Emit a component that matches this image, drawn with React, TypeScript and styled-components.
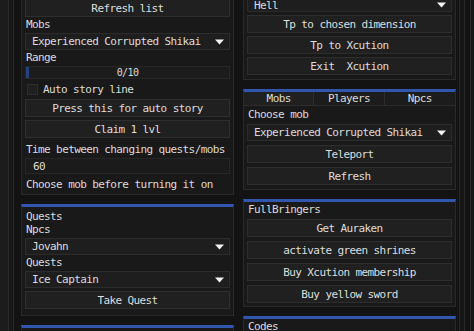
import React, { useState } from 'react';
import styled, { createGlobalStyle } from 'styled-components';

const GlobalStyle = createGlobalStyle`
  html, body {
    margin: 0;
    padding: 0;
    background: #181818;
  }
  body {
    font-family: "DejaVu Sans Mono", "Liberation Mono", monospace;
    font-size: 11px;
    letter-spacing: -0.6px;
    color: #dcdcdc;
  }
`;

const App: React.FC = () => {
  const [autoStory, setAutoStory] = useState(false);
  const [tab, setTab] = useState('Mobs');

  return (
    <>
      <GlobalStyle />
      <Screen>
        <Gutter />
        <WindowFrame>
          <ScrollRegion>
            <Column $offset={-6} $gap={9}>
              <Panel>
                <Button>Refresh list</Button>
                <Label>Mobs</Label>
                <Combo value="Experienced Corrupted Shikai" />
                <Label>Range</Label>
                <Slider>
                  <Grab />
                  0/10
                </Slider>
                <CheckRow onClick={() => setAutoStory(!autoStory)}>
                  <CheckBox $on={autoStory} />
                  Auto story line
                </CheckRow>
                <Button>Press this for auto story</Button>
                <Button>Claim 1 lvl</Button>
                <Label $mt={4}>Time between changing quests/mobs</Label>
                <Input defaultValue="60" />
                <Label $mt={3}>Choose mob before turning it on</Label>
              </Panel>

              <Panel $accent $pb={6}>
                <Title>Quests</Title>
                <Label>Npcs</Label>
                <Combo value="Jovahn" />
                <Label>Quests</Label>
                <Combo value="Ice Captain" />
                <Button>Take Quest</Button>
              </Panel>

              <Panel $accent>
                <Spacer />
              </Panel>
            </Column>

            <Column $offset={-11} $gap={9}>
              <Panel $gap={3}>
                <Combo value="Hell" tall />
                <Button>Tp to chosen dimension</Button>
                <Button>Tp to Xcution</Button>
                <Button>Exit  Xcution</Button>
              </Panel>

              <Panel $accent $flush>
                <Tabs>
                  {['Mobs', 'Players', 'Npcs'].map((t) => (
                    <Tab key={t} $active={tab === t} onClick={() => setTab(t)}>
                      {t}
                    </Tab>
                  ))}
                </Tabs>
                <TabBody>
                  <Label>Choose mob</Label>
                  <Combo value="Experienced Corrupted Shikai" />
                  <Button>Teleport</Button>
                  <Button>Refresh</Button>
                </TabBody>
              </Panel>

              <Panel $accent $gap={4} $pb={3}>
                <Title $tight>FullBringers</Title>
                <Button>Get Auraken</Button>
                <Button>activate green shrines</Button>
                <Button>Buy Xcution membership</Button>
                <Button>Buy yellow sword</Button>
              </Panel>

              <Panel $accent>
                <Title $tight>Codes</Title>
              </Panel>
            </Column>

            <RightEdge>
              <Track />
            </RightEdge>
          </ScrollRegion>
        </WindowFrame>
      </Screen>
    </>
  );
};

type ComboProps = { value: string; tall?: boolean };

const Combo: React.FC<ComboProps> = ({ value, tall }) => {
  return (
    <ComboBox $tall={tall}>
      <span>{value}</span>
      <svg width="9" height="6" viewBox="0 0 9 6">
        <path d="M0 0.5 L9 0.5 L4.5 5.5 Z" fill="#f2f2f2" />
      </svg>
    </ComboBox>
  );
};

const Screen = styled.div`
  width: 474px;
  height: 331px;
  overflow: hidden;
  display: flex;
  background: #1a1a1a;
`;

const Gutter = styled.div`
  width: 8px;
  flex: none;
  background: #1c1c1c;
`;

const WindowFrame = styled.div`
  flex: 1;
  display: flex;
  border-left: 1px solid #2c2c2c;
  padding-left: 4px;
  background: #171717;
`;

const ScrollRegion = styled.div`
  flex: 1;
  display: flex;
  align-items: flex-start;
  gap: 9px;
  border-left: 1px solid #2a2a2a;
  padding-left: 7px;
  background: #131313;
`;

const Column = styled.div<{ $offset: number; $gap: number }>`
  width: 213px;
  flex: none;
  display: flex;
  flex-direction: column;
  gap: ${(p) => p.$gap}px;
  margin-top: ${(p) => p.$offset}px;
`;

const Panel = styled.div<{ $accent?: boolean; $flush?: boolean; $gap?: number; $pb?: number }>`
  display: flex;
  flex-direction: column;
  gap: ${(p) => p.$gap ?? 3}px;
  background: #191919;
  border: 1px solid #2a2a2a;
  border-top: ${(p) => (p.$accent ? '3px solid #3156ad' : '1px solid #2a2a2a')};
  padding: ${(p) => (p.$flush ? '0' : p.$accent ? `3px 3px ${p.$pb ?? 5}px` : '4px 3px')};
`;

const Spacer = styled.div`
  height: 20px;
`;

const Title = styled.div<{ $tight?: boolean }>`
  height: 10px;
  line-height: 10px;
  padding-left: 1px;
  margin-top: ${(p) => (p.$tight ? 0 : 2)}px;
  white-space: nowrap;
`;

const Label = styled.div<{ $mt?: number }>`
  height: 10px;
  line-height: 10px;
  padding-left: 1px;
  margin-top: ${(p) => p.$mt ?? 0}px;
  white-space: nowrap;
`;

const Button = styled.button`
  height: 18px;
  padding: 0;
  font: inherit;
  letter-spacing: inherit;
  color: #dedede;
  background: #202020;
  border: 1px solid #2e2e2e;
  white-space: pre;
  cursor: pointer;

  &:hover {
    background: #262626;
  }
`;

const ComboBox = styled.div<{ $tall?: boolean }>`
  height: ${(p) => (p.$tall ? 18 : 17)}px;
  box-sizing: border-box;
  display: flex;
  align-items: center;
  justify-content: space-between;
  padding: ${(p) => (p.$tall ? '4px 5px 0 6px' : '0 5px 0 6px')};
  background: #1e1e1e;
  border: 1px solid #2c2c2c;
  white-space: nowrap;
`;

const Slider = styled.div`
  height: 13px;
  box-sizing: border-box;
  display: flex;
  align-items: center;
  justify-content: center;
  position: relative;
  background: #1c1c1c;
  border: 1px solid #272727;
  font-size: 10px;
`;

const Grab = styled.div`
  position: absolute;
  left: 0;
  top: 0;
  bottom: 0;
  width: 3px;
  background: #24427f;
`;

const CheckRow = styled.div`
  height: 14px;
  display: flex;
  align-items: center;
  gap: 5px;
  padding-left: 2px;
  cursor: pointer;
  white-space: nowrap;
`;

const CheckBox = styled.div<{ $on: boolean }>`
  width: 11px;
  height: 11px;
  box-sizing: border-box;
  background: ${(p) => (p.$on ? '#3156ad' : '#202020')};
  border: 1px solid #2c2c2c;
`;

const Input = styled.input`
  height: 16px;
  box-sizing: border-box;
  padding: 0 0 0 7px;
  font: inherit;
  letter-spacing: inherit;
  color: #dcdcdc;
  background: #1b1b1b;
  border: 1px solid #262626;
  outline: none;
`;

const Tabs = styled.div`
  display: grid;
  grid-template-columns: repeat(3, 1fr);
`;

const Tab = styled.div<{ $active: boolean }>`
  height: 14px;
  line-height: 13px;
  text-align: center;
  background: ${(p) => (p.$active ? '#202020' : '#1c1c1c')};
  border-right: 1px solid #2c2c2c;
  border-bottom: 1px solid #2c2c2c;
  box-sizing: border-box;
  cursor: pointer;

  &:last-child {
    border-right: none;
  }
`;

const TabBody = styled.div`
  display: flex;
  flex-direction: column;
  gap: 4px;
  padding: 1px 3px 4px;
`;

const RightEdge = styled.div`
  flex: none;
  align-self: stretch;
  width: 17px;
  margin-left: -6px;
  border-left: 1px solid #262626;
  padding-left: 4px;
  background: #161616;
`;

const Track = styled.div`
  width: 5px;
  height: 100%;
  border-left: 1px solid #2a2a2a;
  border-right: 1px solid #2a2a2a;
  background: #121212;
`;

export default App;
